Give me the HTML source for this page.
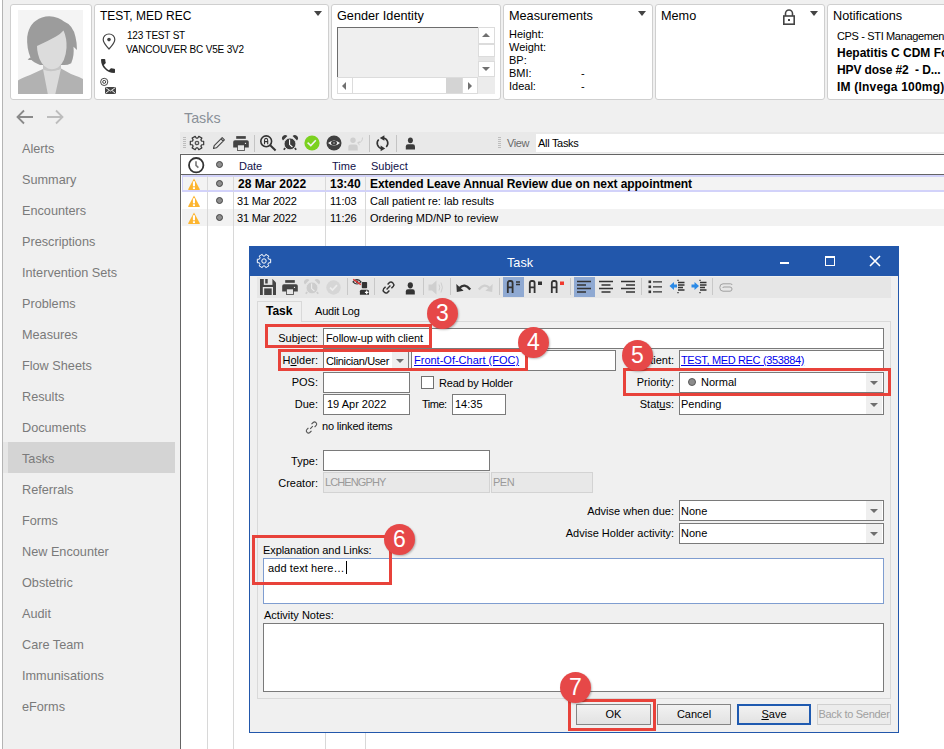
<!DOCTYPE html>
<html><head><meta charset="utf-8">
<style>
*{box-sizing:border-box}
svg{overflow:visible}
html,body{margin:0;padding:0}
body{width:944px;height:749px;overflow:hidden;background:#f0f0f0;position:relative;font-family:"Liberation Sans",sans-serif;color:#000}
.a{position:absolute}
.t{position:absolute;white-space:nowrap;line-height:1}
.card{position:absolute;top:4px;height:96px;background:#fff;border:1px solid #cfcfcf;border-radius:3px}
.nav{position:absolute;left:22px;font-size:12.7px;color:#7a7a7a;white-space:nowrap;line-height:1}
.vl{position:absolute;width:1px;background:#d8d8d8}
.sep{position:absolute;width:1px;background:#c4c4c4}
.inp{position:absolute;background:#fff;border:1px solid #7a7a7a}
.lbl{position:absolute;font-size:11px;white-space:nowrap;line-height:1;text-align:right}
.red{position:absolute;border:3px solid #e8423a}
.badge{position:absolute;width:31px;height:31px;border-radius:50%;background:#e64848;color:#fff;font-size:23px;text-align:center;line-height:30px;box-shadow:1px 1px 2px rgba(0,0,0,.25)}
.dd{position:absolute;right:1px;top:1px;bottom:1px;width:16px;background:#efefef}
.dd:after{content:"";position:absolute;left:4px;top:8px;border-left:4px solid transparent;border-right:4px solid transparent;border-top:4px solid #6e6e6e}
.btn{position:absolute;white-space:nowrap;overflow:hidden;top:704px;height:21px;background:linear-gradient(#f2f2f2,#e2e2e2);border:1px solid #858585;font-size:11px;text-align:center;line-height:19px;color:#000}
</style></head>
<body>
<!-- left border line -->
<div class="a" style="left:0;top:0;width:2px;height:749px;background:#fff"></div><div class="a" style="left:2px;top:0;width:1px;height:749px;background:#b4b4b4"></div>

<!-- HEADER CARDS -->
<div class="card" style="left:10px;width:82px"></div>
<div class="a" style="left:18px;top:10px;width:65px;height:84px;background:#f4f4f4;overflow:hidden">
 <svg width="65" height="84" viewBox="0 0 65 84">
  <path d="M0 84 L0 70.5 Q2 68.5 12 65 L25 59 L43 58.5 L53 64 Q63 67.5 65 69 L65 84 Z" fill="#b2b2b2"/>
  <path d="M25 59 L29.8 84 L37.3 84 L43 58.5 Q36 62 25 59 Z" fill="#dcdcdc"/>
  <path d="M25 55 L25 59.5 Q33 63 43 59 L43 55 Z" fill="#c6c6c6"/>
  <path d="M9.7 49.7 Q11 48 12.5 47.5 Q8.5 38 9.2 27 Q11 12 24 7.5 Q32 5 40 8 Q44 9.5 46 11.5 Q55 15 57.5 27 Q59 33 59 40 Q57 38 55.5 36.8 Q56.5 46 53.2 53.2 Q49 55.5 45 55 L22 55 Q15 52 13.5 50 Q11.5 50 9.7 49.7 Z" fill="#9c9c9c"/>
  <path d="M19 36 Q30 31 38 26.5 Q43 23.5 45.5 20.5 Q49 28 48.5 38 Q47.5 52 40 57.5 Q35 60.5 30 58.5 Q22.5 55 20 44 Q19 40 19 36 Z" fill="#dcdcdc"/>
 </svg>
</div>

<div class="card" style="left:94px;width:235px"></div>
<div class="t" style="left:100px;top:10px;font-size:12px">TEST, MED REC</div>
<div class="a" style="left:314px;top:11px;border-left:4px solid transparent;border-right:4px solid transparent;border-top:5px solid #444"></div>
<svg class="a" style="left:101.5px;top:32.5px" width="14" height="17" viewBox="0 0 14 17"><path d="M7 1 C3.5 1 1.2 3.6 1.2 6.6 C1.2 10 7 16 7 16 C7 16 12.8 10 12.8 6.6 C12.8 3.6 10.5 1 7 1 Z" fill="none" stroke="#444" stroke-width="1.2"/><circle cx="7" cy="6.6" r="1.8" fill="#444"/></svg>
<div class="t" style="left:127px;top:31px;font-size:10px;letter-spacing:-0.2px">123 TEST ST</div>
<div class="t" style="left:126px;top:45px;font-size:10px;letter-spacing:-0.18px">VANCOUVER BC V5E 3V2</div>
<svg class="a" style="left:101px;top:58.5px" width="14" height="14" viewBox="3 3 18 18"><path d="M6.6 10.8c1.4 2.8 3.8 5.1 6.6 6.6l2.2-2.2c.3-.3.7-.4 1-.2 1.1.4 2.3.6 3.6.6.6 0 1 .4 1 1V20c0 .6-.4 1-1 1C10.6 21 3 13.4 3 4c0-.6.4-1 1-1h3.5c.6 0 1 .4 1 1 0 1.3.2 2.5.6 3.6.1.3 0 .7-.2 1L6.6 10.8z" fill="#333"/></svg>
<svg class="a" style="left:100px;top:78px" width="9" height="8" viewBox="0 0 9 8"><circle cx="4.2" cy="3.9" r="3.6" fill="none" stroke="#333" stroke-width="0.9"/><circle cx="4.2" cy="3.9" r="1.5" fill="none" stroke="#333" stroke-width="0.9"/></svg>
<svg class="a" style="left:105px;top:87px" width="11" height="7" viewBox="0 0 11 7"><rect x="0" y="0" width="11" height="7" fill="#444"/><path d="M0.5 0.5 L5.5 4 L10.5 0.5 M0.5 6.5 L4 3.5 M10.5 6.5 L7 3.5" stroke="#fff" stroke-width="0.9" fill="none"/></svg>

<div class="card" style="left:331px;width:170px"></div>
<div class="t" style="left:337px;top:10px;font-size:12.7px">Gender Identity</div>
<div class="a" style="left:337px;top:27px;width:142px;height:51px;background:#efefef;border-left:1px solid #6d6d6d;border-top:1px solid #6d6d6d"></div>

<div class="card" style="left:503px;width:150px"></div>
<div class="t" style="left:509px;top:10px;font-size:12.7px">Measurements</div>
<div class="a" style="left:638px;top:11px;border-left:4px solid transparent;border-right:4px solid transparent;border-top:5px solid #444"></div>

<div class="card" style="left:655px;width:170px"></div>
<div class="t" style="left:661px;top:10px;font-size:12.7px">Memo</div>
<div class="a" style="left:810px;top:11px;border-left:4px solid transparent;border-right:4px solid transparent;border-top:5px solid #444"></div>

<div class="card" style="left:827px;width:130px"></div>
<div class="t" style="left:833px;top:10px;font-size:12.7px">Notifications</div>


<!-- gender listbox scrollbars -->
<div class="a" style="left:478px;top:27px;width:17px;height:51px;background:#e6e6e6"></div>
<div class="a" style="left:478px;top:27px;width:17px;height:17px;background:#fff;border:1px solid #dcdcdc"></div>
<div class="a" style="left:482px;top:33px;border-left:4px solid transparent;border-right:4px solid transparent;border-bottom:4px solid #707070"></div>
<div class="a" style="left:478px;top:44px;width:17px;height:13px;background:#fff;border:1px solid #dcdcdc"></div>
<div class="a" style="left:478px;top:61px;width:17px;height:16px;background:#fff;border:1px solid #dcdcdc"></div>
<div class="a" style="left:482px;top:67px;border-left:4px solid transparent;border-right:4px solid transparent;border-top:4px solid #707070"></div>
<div class="a" style="left:337px;top:77px;width:141px;height:17px;background:#fff;border:1px solid #dcdcdc"></div>
<div class="a" style="left:337px;top:77px;width:16px;height:17px;background:#fff;border:1px solid #dcdcdc"></div>
<div class="a" style="left:342px;top:82px;border-top:4px solid transparent;border-bottom:4px solid transparent;border-right:4px solid #707070"></div>
<div class="a" style="left:446px;top:78px;width:16px;height:15px;background:#d4d4d4"></div>
<div class="a" style="left:462px;top:77px;width:16px;height:17px;background:#fff;border:1px solid #dcdcdc"></div>
<div class="a" style="left:468px;top:82px;border-top:4px solid transparent;border-bottom:4px solid transparent;border-left:4px solid #707070"></div>
<div class="a" style="left:478px;top:77px;width:17px;height:17px;background:#ececec"></div>
<!-- measurements -->
<div class="t" style="left:509px;top:29px;font-size:11px">Height:</div>
<div class="t" style="left:509px;top:42px;font-size:11px">Weight:</div>
<div class="t" style="left:509px;top:55px;font-size:11px">BP:</div>
<div class="t" style="left:509px;top:68px;font-size:11px">BMI:</div>
<div class="t" style="left:509px;top:81px;font-size:11px">Ideal:</div>
<div class="t" style="left:581px;top:68px;font-size:11px">-</div>
<div class="t" style="left:581px;top:81px;font-size:11px">-</div>
<!-- memo lock -->
<svg class="a" style="left:783px;top:9px" width="12" height="16" viewBox="0 0 12 16"><path d="M2.5 7 V4.5 A3.5 3.5 0 0 1 9.5 4.5 V7" fill="none" stroke="#444" stroke-width="1.6"/><rect x="0.8" y="7" width="10.4" height="8.2" fill="none" stroke="#444" stroke-width="1.6"/><rect x="5" y="10" width="2" height="2" fill="#444"/></svg>
<!-- notifications -->
<div class="t" style="left:837px;top:31px;font-size:11px;letter-spacing:-0.35px">CPS - STI Management</div>
<div class="t" style="left:837px;top:47px;font-size:12px;font-weight:700;letter-spacing:0px">Hepatitis C CDM Form</div>
<div class="t" style="left:837px;top:64px;font-size:12px;font-weight:700;letter-spacing:-0.1px">HPV dose #2&nbsp; - D...</div>
<div class="t" style="left:837px;top:81px;font-size:12px;font-weight:700;letter-spacing:0.2px">IM (Invega 100mg)</div>

<!-- NAV -->
<div class="a" style="left:3px;top:442px;width:5px;height:31px;background:#e6e6e6"></div>
<div class="a" style="left:8px;top:442px;width:167px;height:31px;background:#d4d4d4"></div>
<div class="a" style="left:180px;top:154px;width:1px;height:595px;background:#646464"></div>

<svg class="a" style="left:16px;top:109px" width="18" height="16" viewBox="0 0 18 16"><path d="M17 8 H2 M8 1.5 L1.5 8 L8 14.5" fill="none" stroke="#8a8a8a" stroke-width="1.8"/></svg>
<svg class="a" style="left:46px;top:109px" width="18" height="16" viewBox="0 0 18 16"><path d="M1 8 H16 M10 1.5 L16.5 8 L10 14.5" fill="none" stroke="#bdbdbd" stroke-width="1.8"/></svg>
<div class="nav" style="top:143px">Alerts</div>
<div class="nav" style="top:174px">Summary</div>
<div class="nav" style="top:205px">Encounters</div>
<div class="nav" style="top:236px">Prescriptions</div>
<div class="nav" style="top:267px">Intervention Sets</div>
<div class="nav" style="top:298px">Problems</div>
<div class="nav" style="top:329px">Measures</div>
<div class="nav" style="top:360px">Flow Sheets</div>
<div class="nav" style="top:391px">Results</div>
<div class="nav" style="top:422px">Documents</div>
<div class="nav" style="top:453px">Tasks</div>
<div class="nav" style="top:484px">Referrals</div>
<div class="nav" style="top:515px">Forms</div>
<div class="nav" style="top:546px">New Encounter</div>
<div class="nav" style="top:577px">Obstetric</div>
<div class="nav" style="top:608px">Audit</div>
<div class="nav" style="top:639px">Care Team</div>
<div class="nav" style="top:670px">Immunisations</div>
<div class="nav" style="top:701px">eForms</div>

<!-- TASKS -->
<div class="t" style="left:184px;top:111px;font-size:14.3px;color:#8a9098">Tasks</div>
<div class="a" style="left:180px;top:132px;width:764px;height:21px;background:#e9e9e9"></div>
<div class="a" style="left:180px;top:154px;width:764px;height:1px;background:#646464"></div>
<div class="a" style="left:181px;top:155px;width:763px;height:594px;background:#fff"></div>


<!-- main toolbar icons -->
<div class="a" style="left:183px;top:137px;width:3px;height:11px;background:repeating-linear-gradient(#bdbdbd 0 1px,transparent 1px 2px)"></div>
<svg class="a" style="left:189px;top:135px" width="16" height="16" viewBox="0 0 16 16"><path d="M12.68 6.24 L14.67 6.23 L14.67 9.77 L12.68 9.76 L11.87 11.17 L12.87 12.89 L9.80 14.66 L8.81 12.93 L7.19 12.93 L6.20 14.66 L3.13 12.89 L4.13 11.17 L3.32 9.76 L1.33 9.77 L1.33 6.23 L3.32 6.24 L4.13 4.83 L3.13 3.11 L6.20 1.34 L7.19 3.07 L8.81 3.07 L9.80 1.34 L12.87 3.11 L11.87 4.83 Z" fill="none" stroke="#3a3a3a" stroke-width="1.2" stroke-linejoin="round"/><circle cx="8" cy="8" r="1.7" fill="none" stroke="#555" stroke-width="1.3"/></svg>
<svg class="a" style="left:212px;top:136px" width="14" height="14" viewBox="0 0 14 14"><path d="M1.5 12.5 L2.2 9.6 L10.2 1.6 L12.4 3.8 L4.4 11.8 Z M9 2.8 L11.2 5" fill="none" stroke="#444" stroke-width="1.1" stroke-linejoin="round"/></svg>
<svg class="a" style="left:233px;top:136px" width="16" height="16" viewBox="0 0 16 16"><rect x="3.2" y="0.1" width="9.6" height="2.7" fill="#444"/><path d="M0.2 11.6 V6 Q0.2 4.2 2 4.2 H14 Q15.8 4.2 15.8 6 V11.6 Z" fill="#444"/><rect x="4.1" y="8.6" width="7.7" height="6.3" fill="#444"/><rect x="4.9" y="9.3" width="6.1" height="4.8" fill="#e9e9e9"/><circle cx="12.5" cy="7.4" r="0.65" fill="#e9e9e9"/></svg>
<div class="sep" style="left:254px;top:135px;height:17px"></div>
<svg class="a" style="left:260px;top:136px" width="17" height="15" viewBox="0 0 17 15"><circle cx="6.2" cy="5.3" r="5.4" fill="none" stroke="#333" stroke-width="1.6"/><path d="M10.2 9.3 L15.6 14.4" stroke="#333" stroke-width="2"/><path d="M4.5 8.2 V4.4 Q4.5 2.4 6.1 2.4 Q7.7 2.4 7.7 4.4 V8.2 M4.5 5.6 H7.7" fill="none" stroke="#333" stroke-width="1.1"/></svg>
<svg class="a" style="left:282px;top:135px" width="16" height="16" viewBox="0 0 16 16"><path d="M1 5.4 A3 3 0 0 1 5.4 1 Z M15 5.4 A3 3 0 0 0 10.6 1 Z" fill="#3c3c3c"/><path d="M3.2 13 L1.8 14.8 M12.8 13 L14.2 14.8" stroke="#3c3c3c" stroke-width="1.8"/><circle cx="8" cy="8.9" r="5.9" fill="#3c3c3c" stroke="#e9e9e9" stroke-width="0.8"/><path d="M7.6 4.4 V9.6 L10.4 12" fill="none" stroke="#fff" stroke-width="1.1"/></svg>
<svg class="a" style="left:304px;top:135px" width="16" height="16" viewBox="0 0 16 16"><circle cx="8" cy="8" r="7.6" fill="#7bd11f"/><path d="M3.6 7.6 L6.8 10.6 L11.8 5.3" fill="none" stroke="#f2f2f2" stroke-width="1.6"/></svg>
<svg class="a" style="left:326px;top:135px" width="16" height="16" viewBox="0 0 16 16"><circle cx="8" cy="8" r="7.5" fill="#3f3f3f"/><path d="M2 8 Q8 3 14 8 Q8 13 2 8 Z" fill="#f4f4f4"/><ellipse cx="8" cy="8" rx="3" ry="2.2" fill="#3f3f3f"/><circle cx="8" cy="8" r="0.8" fill="#bbb"/></svg>
<svg class="a" style="left:348px;top:136px" width="16" height="15" viewBox="0 0 16 15"><circle cx="5" cy="4.2" r="2.7" fill="#cfcfcf"/><path d="M0.3 14.5 V10.8 Q0.3 8.4 2.7 8.4 H7.3 Q9.7 8.4 9.7 10.8 V14.5 Z" fill="#cfcfcf"/><path d="M14.5 1.5 Q14.5 6.5 10 7" fill="none" stroke="#cfcfcf" stroke-width="1"/><path d="M11.5 5.2 L9.6 7.1 L11.6 8.8" fill="none" stroke="#cfcfcf" stroke-width="1"/></svg>
<div class="sep" style="left:369px;top:135px;height:17px"></div>
<svg class="a" style="left:376px;top:135px" width="14" height="16" viewBox="0 0 14 16"><path d="M10.25 11.95 A5.3 5.3 0 0 0 7.4 2.98" fill="none" stroke="#333" stroke-width="1.6"/><path d="M8.4 0.2 V5.8 L3.8 3 Z" fill="#333"/><path d="M2.75 4.45 A5.3 5.3 0 0 0 5.6 13.42" fill="none" stroke="#333" stroke-width="1.6"/><path d="M4.6 10.6 V16.2 L9.2 13.4 Z" fill="#333"/></svg>
<div class="sep" style="left:396px;top:135px;height:17px"></div>
<svg class="a" style="left:405px;top:137px" width="11" height="13" viewBox="0 0 11 13"><ellipse cx="5.4" cy="3.3" rx="2.5" ry="2.9" fill="#3c3c3c"/><path d="M0.8 12.6 V9.6 Q0.8 7.3 3 7.3 H7.8 Q10 7.3 10 9.6 V12.6 Z" fill="#3c3c3c"/></svg>
<div class="a" style="left:498px;top:137px;width:3px;height:11px;background:repeating-linear-gradient(#bdbdbd 0 1px,transparent 1px 2px)"></div>
<div class="t" style="left:507px;top:138px;font-size:11px;color:#6a6a6a;letter-spacing:-0.4px">View</div>
<div class="a" style="left:536px;top:134px;width:408px;height:18px;background:#fff"></div>
<div class="t" style="left:538px;top:138px;font-size:11px;letter-spacing:-0.3px">All Tasks</div>

<!-- GRID -->
<div class="vl" style="left:207px;top:175px;height:574px"></div>
<div class="vl" style="left:233px;top:175px;height:574px"></div>
<div class="vl" style="left:325px;top:175px;height:574px"></div>
<div class="vl" style="left:365px;top:175px;height:574px"></div>
<div class="a" style="left:181px;top:174px;width:763px;height:1px;background:#646464"></div>
<svg class="a" style="left:188px;top:157px" width="17" height="17" viewBox="0 0 17 17"><circle cx="8.2" cy="8.2" r="7.2" fill="#fff" stroke="#333" stroke-width="1.8"/><path d="M8 4.3 V8.4 L10.4 10.6" fill="none" stroke="#777" stroke-width="1.6"/></svg>
<div class="t" style="left:239px;top:161px;font-size:11px;color:#10104a">Date</div>
<div class="t" style="left:332px;top:161px;font-size:11px;color:#10104a">Time</div>
<div class="t" style="left:371px;top:161px;font-size:11px;color:#10104a">Subject</div>
<!-- rows -->
<div class="a" style="left:182px;top:175px;width:762px;height:17px;background:#f3f3f3;border:2px solid #d2d2fa;border-right:0;border-left-width:1px"></div>
<div class="a" style="left:182px;top:209px;width:762px;height:17px;background:#f2f2f2"></div>
<div class="vl" style="left:207px;top:176px;height:15px"></div>
<div class="vl" style="left:233px;top:176px;height:15px"></div>
<div class="vl" style="left:325px;top:176px;height:15px"></div>
<div class="vl" style="left:365px;top:176px;height:15px"></div>
<div class="vl" style="left:207px;top:209px;height:17px"></div>
<div class="vl" style="left:233px;top:209px;height:17px"></div>
<div class="vl" style="left:325px;top:209px;height:17px"></div>
<div class="vl" style="left:365px;top:209px;height:17px"></div>
<div class="a" style="left:216px;top:161px;width:7px;height:7px;border-radius:50%;background:#8e8e8e;border:1px solid #454545"></div>
<div class="a" style="left:216px;top:180px;width:7px;height:7px;border-radius:50%;background:#8e8e8e;border:1px solid #454545"></div>
<div class="a" style="left:216px;top:197px;width:7px;height:7px;border-radius:50%;background:#8e8e8e;border:1px solid #454545"></div>
<div class="a" style="left:216px;top:214px;width:7px;height:7px;border-radius:50%;background:#8e8e8e;border:1px solid #454545"></div>
<svg class="a" style="left:188px;top:178px" width="12" height="12" viewBox="0 0 12 12"><path d="M6 0.6 L11.8 11.2 Q12 11.9 11.3 11.9 H0.7 Q0 11.9 0.2 11.2 Z" fill="#fdb52f"/><rect x="4.9" y="3.3" width="2.1" height="5" fill="#fff"/><rect x="4.9" y="9.3" width="2.1" height="1.8" fill="#fff"/></svg>
<svg class="a" style="left:188px;top:195px" width="12" height="12" viewBox="0 0 12 12"><path d="M6 0.6 L11.8 11.2 Q12 11.9 11.3 11.9 H0.7 Q0 11.9 0.2 11.2 Z" fill="#fdb52f"/><rect x="4.9" y="3.3" width="2.1" height="5" fill="#fff"/><rect x="4.9" y="9.3" width="2.1" height="1.8" fill="#fff"/></svg>
<svg class="a" style="left:188px;top:212px" width="12" height="12" viewBox="0 0 12 12"><path d="M6 0.6 L11.8 11.2 Q12 11.9 11.3 11.9 H0.7 Q0 11.9 0.2 11.2 Z" fill="#fdb52f"/><rect x="4.9" y="3.3" width="2.1" height="5" fill="#fff"/><rect x="4.9" y="9.3" width="2.1" height="1.8" fill="#fff"/></svg>
<div class="t" style="left:238px;top:178px;font-size:12px;font-weight:700">28 Mar 2022</div>
<div class="t" style="left:330px;top:178px;font-size:12px;font-weight:700">13:40</div>
<div class="t" style="left:370px;top:178px;font-size:12px;font-weight:700;letter-spacing:-0.07px">Extended Leave Annual Review due on next appointment</div>
<div class="t" style="left:237px;top:196px;font-size:11px;letter-spacing:-0.2px">31 Mar 2022</div>
<div class="t" style="left:330px;top:196px;font-size:11px">11:03</div>
<div class="t" style="left:370px;top:196px;font-size:11px">Call patient re: lab results</div>
<div class="t" style="left:237px;top:213px;font-size:11px;letter-spacing:-0.2px">31 Mar 2022</div>
<div class="t" style="left:330px;top:213px;font-size:11px">11:26</div>
<div class="t" style="left:370px;top:213px;font-size:11px">Ordering MD/NP to review</div>

<!-- DIALOG -->
<div class="a" style="left:249px;top:246px;width:650px;height:487px;background:#f0f0f0;border:1px solid #2257ab;border-top:0"></div>
<div class="a" style="left:249px;top:246px;width:650px;height:30px;background:#2257ab"></div>
<div class="t" style="left:507px;top:257px;font-size:12.7px;color:#fff">Task</div>


<svg class="a" style="left:256px;top:253px" width="16" height="16" viewBox="0 0 16 16"><path d="M12.68 6.24 L14.67 6.23 L14.67 9.77 L12.68 9.76 L11.87 11.17 L12.87 12.89 L9.80 14.66 L8.81 12.93 L7.19 12.93 L6.20 14.66 L3.13 12.89 L4.13 11.17 L3.32 9.76 L1.33 9.77 L1.33 6.23 L3.32 6.24 L4.13 4.83 L3.13 3.11 L6.20 1.34 L7.19 3.07 L8.81 3.07 L9.80 1.34 L12.87 3.11 L11.87 4.83 Z" fill="none" stroke="#fff" stroke-width="1"/><circle cx="8" cy="8" r="2.2" fill="none" stroke="#fff" stroke-width="1"/></svg>
<div class="a" style="left:780px;top:262px;width:9px;height:2px;background:#fff"></div>
<div class="a" style="left:825px;top:256px;width:10px;height:10px;border:1px solid #fff;border-top-width:2px"></div>
<svg class="a" style="left:869px;top:255px" width="12" height="12" viewBox="0 0 12 12"><path d="M1 1 L11 11 M11 1 L1 11" stroke="#fff" stroke-width="1.6"/></svg>
<!-- dialog toolbar -->
<div class="a" style="left:257px;top:277px;width:634px;height:21px;background:#e6e6e6"></div>

<!-- dialog toolbar icons -->
<svg class="a" style="left:260px;top:279px" width="16" height="16" viewBox="0 0 16 16"><path d="M0 0 H12.5 L16 3.5 V16 H0 Z" fill="#444"/><rect x="3.8" y="0" width="8.6" height="5.9" fill="#e6e6e6"/><rect x="5.2" y="0" width="2.5" height="4.5" fill="#444"/><rect x="2.8" y="8" width="10.2" height="8" fill="#e6e6e6"/><rect x="4.2" y="9.4" width="7.5" height="6.6" fill="#444"/></svg>
<svg class="a" style="left:282px;top:280px" width="16" height="16" viewBox="0 0 16 16"><rect x="3.2" y="0.1" width="9.6" height="2.7" fill="#444"/><path d="M0.2 11.6 V6 Q0.2 4.2 2 4.2 H14 Q15.8 4.2 15.8 6 V11.6 Z" fill="#444"/><rect x="4.1" y="8.6" width="7.7" height="6.3" fill="#444"/><rect x="4.9" y="9.3" width="6.1" height="4.8" fill="#e6e6e6"/><circle cx="12.5" cy="7.4" r="0.65" fill="#e6e6e6"/></svg>
<svg class="a" style="left:304px;top:279px" width="16" height="16" viewBox="0 0 16 16"><path d="M1 5.4 A3 3 0 0 1 5.4 1 Z M15 5.4 A3 3 0 0 0 10.6 1 Z" fill="#cdcdcd"/><path d="M3.2 13 L1.8 14.8 M12.8 13 L14.2 14.8" stroke="#cdcdcd" stroke-width="1.8"/><circle cx="8" cy="8.9" r="5.9" fill="#cdcdcd" stroke="#e6e6e6" stroke-width="0.8"/><path d="M7.6 4.4 V9.6 L10.4 12" fill="none" stroke="#ececec" stroke-width="1.1"/></svg>
<svg class="a" style="left:326px;top:280px" width="15" height="15" viewBox="0 0 15 15"><circle cx="7.5" cy="7.5" r="7.2" fill="#d6d6d6"/><path d="M4 7.6 L6.5 10 L11 5.2" fill="none" stroke="#ececec" stroke-width="1.8"/></svg>
<div class="sep" style="left:347px;top:278px;height:17px;background:#c8c8c8"></div>
<svg class="a" style="left:352px;top:278px" width="18" height="18" viewBox="0 0 18 18"><path d="M1 3.8 Q5 -0.6 9 3.8 Q5 8.2 1 3.8 Z" fill="none" stroke="#333" stroke-width="1.1"/><circle cx="5" cy="3.8" r="1.3" fill="#333"/><path d="M1.2 1.2 L8.8 6.6" stroke="#e83030" stroke-width="1.3"/><rect x="9.8" y="4" width="5.3" height="6.2" rx="0.8" fill="#333"/><path d="M7.9 16.7 V13.2 Q7.9 11.7 9.4 11.7 H15.5 Q17 11.7 17 13.2 V16.7 Z" fill="#333"/><path d="M14.7 12.6 V16.2 M12.9 14.4 H16.5" stroke="#fff" stroke-width="1.2"/></svg>
<div class="sep" style="left:374px;top:278px;height:17px;background:#c8c8c8"></div>
<svg class="a" style="left:382px;top:281px" width="13" height="13" viewBox="0 0 13 13"><path d="M4.6 8.4 L8.4 4.6 M5.6 3.4 L7.6 1.4 Q9.2 0.2 10.9 1.9 Q12.6 3.6 11.4 5.2 L9.4 7.2 M7.4 9.6 L5.4 11.6 Q3.8 12.8 2.1 11.1 Q0.4 9.4 1.6 7.8 L3.6 5.8" fill="none" stroke="#333" stroke-width="1.4"/></svg>
<svg class="a" style="left:405px;top:282px" width="11" height="13" viewBox="0 0 11 13"><ellipse cx="5.3" cy="3.3" rx="2.6" ry="3.1" fill="#333"/><path d="M0.8 12.5 V9.6 Q0.8 7.3 3 7.3 H7.6 Q9.8 7.3 9.8 9.6 V12.5 Z" fill="#333"/></svg>
<div class="sep" style="left:423px;top:278px;height:17px;background:#c8c8c8"></div>
<svg class="a" style="left:428px;top:280px" width="16" height="15" viewBox="0 0 16 15"><path d="M0.5 4.5 H4 L8.5 0.5 V14.5 L4 10.5 H0.5 Z" fill="#cfcfcf"/><path d="M11 4.5 Q12.5 7.5 11 10.5 M13 2.5 Q15.8 7.5 13 12.5" fill="none" stroke="#cfcfcf" stroke-width="1"/></svg>
<div class="sep" style="left:450px;top:278px;height:17px;background:#c8c8c8"></div>
<svg class="a" style="left:456px;top:282px" width="15" height="10" viewBox="0 0 15 10"><path d="M3.5 6 Q8.5 0.5 14.2 7.5" fill="none" stroke="#333" stroke-width="2.4"/><path d="M0.3 2 L0.8 10 L7.6 8.8 Z" fill="#333"/></svg>
<svg class="a" style="left:478px;top:282px" width="15" height="10" viewBox="0 0 15 10"><path d="M11.5 6 Q6.5 0.5 0.8 7.5" fill="none" stroke="#cfcfcf" stroke-width="2.4"/><path d="M14.7 2 L14.2 10 L7.4 8.8 Z" fill="#cfcfcf"/></svg>
<div class="sep" style="left:499px;top:278px;height:17px;background:#c8c8c8"></div>
<div class="a" style="left:503px;top:277px;width:21px;height:20px;background:#8fa9d2"></div>
<svg class="a" style="left:506px;top:280px" width="16" height="14" viewBox="0 0 16 14"><path d="M1.8 13 V3 Q1.8 1 3.6 1 H4.8 Q6.6 1 6.6 3 V13 M1.8 7.3 H6.6" fill="none" stroke="#333" stroke-width="1.8"/><path d="M10 2 H14 M10 4.5 H14" stroke="#333" stroke-width="1.3"/></svg>
<svg class="a" style="left:528px;top:280px" width="16" height="14" viewBox="0 0 16 14"><path d="M1.8 13 V3 Q1.8 1 3.6 1 H4.8 Q6.6 1 6.6 3 V13 M1.8 7.3 H6.6" fill="none" stroke="#333" stroke-width="1.8"/><rect x="10" y="1.5" width="4" height="3.5" fill="#333"/></svg>
<svg class="a" style="left:550px;top:280px" width="16" height="14" viewBox="0 0 16 14"><path d="M1.8 13 V3 Q1.8 1 3.6 1 H4.8 Q6.6 1 6.6 3 V13 M1.8 7.3 H6.6" fill="none" stroke="#333" stroke-width="1.8"/><rect x="10" y="1.5" width="4" height="3.5" fill="#f03a2e"/></svg>
<div class="sep" style="left:570px;top:278px;height:17px;background:#c8c8c8"></div>
<div class="a" style="left:574px;top:277px;width:21px;height:20px;background:#8fa9d2"></div>
<svg class="a" style="left:576px;top:280px" width="16" height="14" viewBox="0 0 16 14"><path d="M1 1.5 H15 M1 5 H10 M1 8.5 H15 M1 12 H10" stroke="#333" stroke-width="1.6"/></svg>
<svg class="a" style="left:598px;top:280px" width="16" height="14" viewBox="0 0 16 14"><path d="M1 1.5 H15 M3.5 5 H12.5 M1 8.5 H15 M3.5 12 H12.5" stroke="#333" stroke-width="1.6"/></svg>
<svg class="a" style="left:620px;top:280px" width="16" height="14" viewBox="0 0 16 14"><path d="M1 1.5 H15 M6 5 H15 M1 8.5 H15 M6 12 H15" stroke="#333" stroke-width="1.6"/></svg>
<div class="sep" style="left:641px;top:278px;height:17px;background:#c8c8c8"></div>
<svg class="a" style="left:648px;top:280px" width="15" height="14" viewBox="0 0 15 14"><rect x="0.5" y="0.5" width="2.6" height="2.6" fill="#333"/><rect x="0.5" y="5.5" width="2.6" height="2.6" fill="#333"/><rect x="0.5" y="10.5" width="2.6" height="2.6" fill="#333"/><path d="M5 1.8 H14 M5 6.8 H14 M5 11.8 H14" stroke="#333" stroke-width="1.2"/></svg>
<svg class="a" style="left:669px;top:279px" width="16" height="15" viewBox="0 0 16 15"><path d="M0.5 7 L5 3 V5.5 H8 V8.5 H5 V11 Z" fill="#2b8ae6"/><path d="M9 0.8 V2 M9 13 V14.3" stroke="#333" stroke-width="1.3"/><path d="M9 3.5 H15.5 M9 6 H15.5 M9 8.5 H14 M9 11 H15.5" stroke="#333" stroke-width="1.5"/></svg>
<svg class="a" style="left:691px;top:279px" width="16" height="15" viewBox="0 0 16 15"><path d="M8 7 L3.5 3 V5.5 H0.5 V8.5 H3.5 V11 Z" fill="#2b8ae6"/><path d="M9 0.8 V2 M9 13 V14.3" stroke="#333" stroke-width="1.3"/><path d="M9 3.5 H15.5 M9 6 H15.5 M9 8.5 H14 M9 11 H15.5" stroke="#333" stroke-width="1.5"/></svg>
<div class="sep" style="left:712px;top:278px;height:17px;background:#c8c8c8"></div>
<svg class="a" style="left:719px;top:283px" width="14" height="9" viewBox="0 0 14 9"><path d="M13 2 Q13 0.8 11.5 0.8 H4 Q0.8 0.8 0.8 4.5 Q0.8 8.2 4 8.2 H11 Q13 8.2 13 6 Q13 4 11 4 H5 Q3.8 4 3.8 5" fill="none" stroke="#a0a0a0" stroke-width="1"/></svg>
<div class="a" style="left:257px;top:321px;width:634px;height:378px;border:1px solid #d9d9d9"></div>
<div class="a" style="left:257px;top:301px;width:45px;height:21px;background:#f0f0f0;border:1px solid #d9d9d9;border-bottom:0"></div>
<div class="t" style="left:266px;top:305px;font-size:12px;font-weight:700">Task</div>
<div class="t" style="left:315px;top:306px;font-size:11px;letter-spacing:-0.2px">Audit Log</div>
<div class="lbl" style="right:626px;top:333px;">Subject:</div>
<div class="inp" style="left:323px;top:328px;width:561px;height:21px;"></div>
<div class="t" style="left:326px;top:333px;font-size:11px;letter-spacing:-0.1px">Follow-up with client</div>
<div class="lbl" style="right:626px;top:355px;">H<u>o</u>lder:</div>
<div class="inp" style="left:323px;top:350px;width:86px;height:21px;"></div>
<div class="a" style="left:392px;top:351px;width:16px;height:19px;background:#efefef"></div><div class="a" style="left:396px;top:359px;border-left:4px solid transparent;border-right:4px solid transparent;border-top:4px solid #6e6e6e"></div>
<div class="t" style="left:326px;top:356px;font-size:11px;letter-spacing:-0.35px">Clinician/User</div>
<div class="inp" style="left:411px;top:350px;width:205px;height:21px;"></div>
<div class="t" style="left:414px;top:355px;font-size:11px;color:#0000ee"><u>Front-Of-Chart (FOC)</u></div>
<div class="lbl" style="right:270px;top:355px;">Patient:</div>
<div class="inp" style="left:679px;top:350px;width:205px;height:21px;"></div>
<div class="t" style="left:681px;top:355px;font-size:11px;color:#0000ee;letter-spacing:-0.35px"><u>TEST, MED REC (353884)</u></div>
<div class="lbl" style="right:626px;top:377px;">POS:</div>
<div class="inp" style="left:323px;top:372px;width:87px;height:21px;"></div>
<div class="a" style="left:421px;top:376px;width:13px;height:13px;background:#fff;border:1px solid #707070"></div>
<div class="t" style="left:439px;top:378px;font-size:11px;letter-spacing:-0.2px">Read by Holder</div>
<div class="lbl" style="right:270px;top:377px;">Priority:</div>
<div class="inp" style="left:679px;top:372px;width:205px;height:21px;"></div>
<div class="dd" style="left:866px;top:373px;width:16px;height:19px;right:auto;bottom:auto"></div>
<div class="a" style="left:688px;top:378px;width:8px;height:8px;border-radius:50%;background:#8c8c8c;border:1px solid #5a5a5a"></div>
<div class="t" style="left:701px;top:377px;font-size:11px;">Normal</div>
<div class="lbl" style="right:626px;top:399px;">Due:</div>
<div class="inp" style="left:323px;top:394px;width:87px;height:21px;"></div>
<div class="t" style="left:327px;top:399px;font-size:11px;">19 Apr 2022</div>
<div class="t" style="left:422px;top:399px;font-size:11px;letter-spacing:-0.5px">Time:</div>
<div class="inp" style="left:452px;top:394px;width:54px;height:21px;"></div>
<div class="t" style="left:455px;top:399px;font-size:11px;">14:35</div>
<div class="lbl" style="right:270px;top:399px;">Stat<u>u</u>s:</div>
<div class="inp" style="left:679px;top:394px;width:205px;height:21px;"></div>
<div class="dd" style="left:866px;top:395px;width:16px;height:19px;right:auto;bottom:auto"></div>
<div class="t" style="left:681px;top:399px;font-size:11px;">Pending</div>
<svg class="a" style="left:305px;top:421px" width="13" height="13" viewBox="0 0 13 13"><path d="M5.2 7.8 L7.8 5.2 M6.5 3.2 L8.2 1.5 Q9.6 0.3 11 1.7 Q12.4 3.1 11.2 4.5 L9.6 6.1 M6.5 9.8 L4.8 11.5 Q3.4 12.7 2 11.3 Q0.6 9.9 1.8 8.5 L3.4 6.9" fill="none" stroke="#555" stroke-width="1.1"/></svg>
<div class="t" style="left:322px;top:421px;font-size:11px;letter-spacing:-0.2px">no linked items</div>
<div class="lbl" style="right:626px;top:456px;">Type:</div>
<div class="inp" style="left:323px;top:450px;width:167px;height:21px;"></div>
<div class="lbl" style="right:626px;top:478px;">Creator:</div>
<div class="inp" style="left:323px;top:472px;width:167px;height:21px;background:#e8e8e8;border-color:#d3d3d3"></div>
<div class="inp" style="left:491px;top:472px;width:102px;height:21px;background:#e8e8e8;border-color:#d3d3d3"></div>
<div class="t" style="left:325px;top:477px;font-size:11px;color:#9a9a9a;letter-spacing:-0.9px">LCHENGPHY</div>
<div class="t" style="left:493px;top:477px;font-size:11px;color:#9a9a9a;letter-spacing:-0.5px">PEN</div>
<div class="lbl" style="right:270px;top:506px;">Advise when due:</div>
<div class="inp" style="left:679px;top:500px;width:205px;height:21px;"></div>
<div class="dd" style="left:866px;top:501px;width:16px;height:19px;right:auto;bottom:auto"></div>
<div class="t" style="left:681px;top:506px;font-size:11px;">None</div>
<div class="lbl" style="right:270px;top:528px;">Advise Holder activity:</div>
<div class="inp" style="left:679px;top:523px;width:205px;height:21px;"></div>
<div class="dd" style="left:866px;top:524px;width:16px;height:19px;right:auto;bottom:auto"></div>
<div class="t" style="left:681px;top:528px;font-size:11px;">None</div>
<div class="t" style="left:263px;top:545px;font-size:11px;letter-spacing:-0.1px">Explanation and Links:</div>
<div class="inp" style="left:263px;top:558px;width:621px;height:46px;border-color:#7f9dd0"></div>
<div class="t" style="left:268px;top:563px;font-size:11px;letter-spacing:0.1px">add text here&hellip;</div>
<div class="a" style="left:346px;top:561px;width:1px;height:13px;background:#000"></div>
<div class="t" style="left:264px;top:610px;font-size:11px;">Activity Notes:</div>
<div class="inp" style="left:263px;top:623px;width:621px;height:69px;"></div>
<div class="btn" style="left:576px;width:75px">OK</div>
<div class="btn" style="left:657px;width:74px">Cancel</div>
<div class="btn" style="left:737px;width:74px;border:2px solid #1f5ab0;line-height:17px"><u>S</u>ave</div>
<div class="btn" style="left:817px;width:74px;color:#a0a0a0;border-color:#d0d0d0;background:#ececec;letter-spacing:-0.3px">Back to Sender</div>
<div class="red" style="left:265px;top:324px;width:167px;height:24px"></div>
<div class="red" style="left:278px;top:349px;width:250px;height:22px"></div>
<div class="red" style="left:623px;top:368px;width:268px;height:28px"></div>
<div class="red" style="left:252px;top:535px;width:140px;height:50px"></div>
<div class="red" style="left:568px;top:699px;width:88px;height:32px"></div>
<div class="badge" style="left:427px;top:298px">3</div>
<div class="badge" style="left:518px;top:327px">4</div>
<div class="badge" style="left:622px;top:340px">5</div>
<div class="badge" style="left:384px;top:524px">6</div>
<div class="badge" style="left:560px;top:672px">7</div>
</body></html>
